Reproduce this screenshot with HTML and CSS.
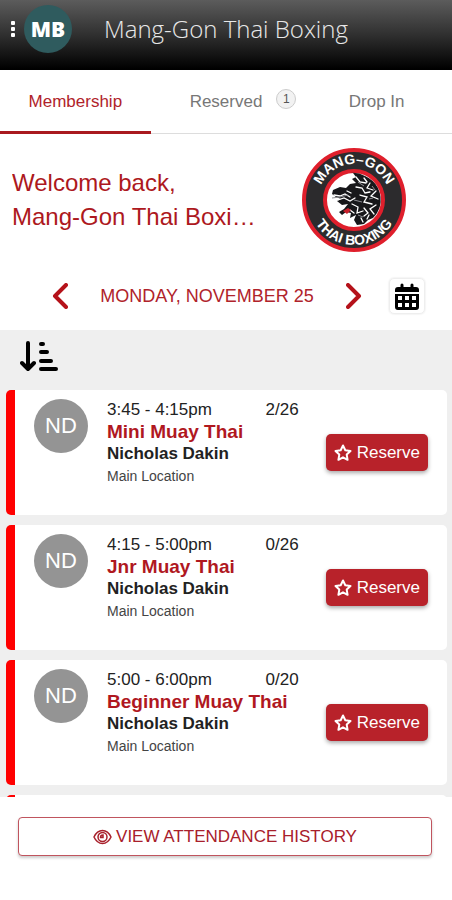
FILE: index.html
```html
<!DOCTYPE html>
<html lang="en">
<head>
    <meta charset="UTF-8">
    <meta name="viewport" content="width=device-width, initial-scale=1.0">
    <title>Mang-Gon Thai Boxing</title>
    <link rel="stylesheet" href="styles.css">
</head>
<body>
    <header class="app-header">
        <button class="menu-btn" aria-label="Menu">
            <svg width="4" height="16" viewBox="0 0 4 16" fill="#fff">
                <rect y="0" width="4" height="4" rx="1"/>
                <rect y="6" width="4" height="4" rx="1"/>
                <rect y="12" width="4" height="4" rx="1"/>
            </svg>
        </button>
        <div class="brand">MB</div>
        <h1>Mang-Gon Thai Boxing</h1>
    </header>

    <nav class="tabs">
        <a class="tab active" href="#membership">Membership</a>
        <a class="tab" href="#reserved"><span class="tab-label">Reserved<span class="badge">1</span></span></a>
        <a class="tab" href="#dropin">Drop In</a>
    </nav>

    <section class="welcome">
        <div class="welcome-text">
            <p>Welcome back,</p>
            <p>Mang-Gon Thai Boxi…</p>
        </div>
        <svg class="club-logo" viewBox="0 0 104 104" role="img" aria-label="Club logo">
            <defs>
                <path id="arcTop" d="M16 52a36 36 0 0 1 72 0"/>
                <path id="arcBottom" d="M7 52a45 45 0 0 0 90 0"/>
            </defs>
            <circle cx="52" cy="52" r="50" fill="#2c2b2d" stroke="#df1f2c" stroke-width="4"/>
            <circle cx="52" cy="52" r="29" fill="#fff" stroke="#df1f2c" stroke-width="4"/>
            <text class="logo-text"><textPath href="#arcTop" startOffset="50%" text-anchor="middle">MANG–GON</textPath></text>
            <text class="logo-text"><textPath href="#arcBottom" startOffset="50%" text-anchor="middle">THAI BOXING</textPath></text>
            <!-- dragon head -->
            <path fill="#17171a" d="M48 25q8-1 15 3 9 4 13 12 4 9 2 18-2 7-7 12l-5 2-4 4-7 1-3-5 2-5-6 3 1-5-5-1-4 3-3-3 5-3 4-5-6 1-5-4 4-2-5-2-4-3 1-4 7-3 6 1 4-4 6-1-4-4 4-2-3-4z"/>
            <path fill="none" stroke="#fff" stroke-width="1.3" stroke-linecap="round" d="M54 29l4 5 6 1M62 30l3 4M68 35l-3 5 6 2M54 39l6 1 3 5 5-1M74 43l-5 5 7 3M58 47l7 2-3 5 8 2M32 47l6 1 5-2 5 3M36 52l6-2 6 3 5-3M50 56l6 3-1 6 6-2M74 57l-6 4 4 5M62 60l4 5-4 3M48 62l4 3M59 70l2 4M67 67l-2 4M45 43l4 2"/>
            <path fill="none" stroke="#8d8d92" stroke-width="1" d="M30 50l8-1 8-2M52 52l8 2M67 51l4-1M56 67l5 2M56 34l6 4M70 38l3 4"/>
            <path fill="#c8202c" d="M41 63l5-3 3 2-4 4z"/>
        </svg>
    </section>

    <section class="date-row">
        <button class="arrow" aria-label="Previous day">
            <svg width="16" height="26" viewBox="0 0 16 26"><path d="M14 2L3 13l11 11"/></svg>
        </button>
        <span class="date">MONDAY, NOVEMBER 25</span>
        <button class="arrow" aria-label="Next day">
            <svg width="16" height="26" viewBox="0 0 16 26"><path d="M2 2l11 11L2 24"/></svg>
        </button>
        <button class="calendar-btn" aria-label="Pick a date">
            <svg width="24" height="27" viewBox="0 0 24 27">
                <path d="M7 2v4M17 2v4" stroke="#000" stroke-width="3" stroke-linecap="round"/>
                <path d="M3 4h18q3 0 3 3v2H0V7q0-3 3-3z"/>
                <path fill-rule="evenodd" d="M0 11h24v13q0 3-3 3H3q-3 0-3-3zM3 13v4h4v-4zM10 13v4h4v-4zM17 13v4h4v-4zM3 20v4h4v-4zM10 20v4h4v-4zM17 20v4h4v-4z"/>
            </svg>
        </button>
    </section>

    <main class="schedule">
        <div class="sort-row">
            <button class="sort-btn" aria-label="Sort">
                <svg width="38" height="31" viewBox="0 0 38 31" fill="none" stroke="#000" stroke-width="4" stroke-linecap="round" stroke-linejoin="round">
                    <path d="M8 2v25M2 22l6 6 6-6M21 3h2M21 11h6M21 20h10M21 28h15"/>
                </svg>
            </button>
        </div>

        <article class="class-card">
            <div class="avatar">ND</div>
            <div class="details">
                <div class="time"><span>3:45 - 4:15pm</span><span>2/26</span></div>
                <h2>Mini Muay Thai</h2>
                <div class="coach">Nicholas Dakin</div>
                <div class="location">Main Location</div>
            </div>
            <button class="reserve-btn">
                <svg width="18" height="18" viewBox="0 0 18 18"><path d="M9 1.5l2.3 4.8 5.2.7-3.8 3.6.9 5.2L9 13.3l-4.6 2.5.9-5.2L1.5 7l5.2-.7z"/></svg>
                Reserve
            </button>
        </article>

        <article class="class-card">
            <div class="avatar">ND</div>
            <div class="details">
                <div class="time"><span>4:15 - 5:00pm</span><span>0/26</span></div>
                <h2>Jnr Muay Thai</h2>
                <div class="coach">Nicholas Dakin</div>
                <div class="location">Main Location</div>
            </div>
            <button class="reserve-btn">
                <svg width="18" height="18" viewBox="0 0 18 18"><path d="M9 1.5l2.3 4.8 5.2.7-3.8 3.6.9 5.2L9 13.3l-4.6 2.5.9-5.2L1.5 7l5.2-.7z"/></svg>
                Reserve
            </button>
        </article>

        <article class="class-card">
            <div class="avatar">ND</div>
            <div class="details">
                <div class="time"><span>5:00 - 6:00pm</span><span>0/20</span></div>
                <h2>Beginner Muay Thai</h2>
                <div class="coach">Nicholas Dakin</div>
                <div class="location">Main Location</div>
            </div>
            <button class="reserve-btn">
                <svg width="18" height="18" viewBox="0 0 18 18"><path d="M9 1.5l2.3 4.8 5.2.7-3.8 3.6.9 5.2L9 13.3l-4.6 2.5.9-5.2L1.5 7l5.2-.7z"/></svg>
                Reserve
            </button>
        </article>

        <article class="class-card"></article>
    </main>

    <footer class="app-footer">
        <button class="history-btn">
            <svg width="19" height="16" viewBox="0 0 19 16" fill="none" stroke="#a8202b" stroke-width="1.5">
                <path d="M1 8Q4 1.5 9.5 1.5T18 8Q15 14.5 9.5 14.5T1 8z"/>
                <circle cx="9.5" cy="8" r="4.5"/>
                <path d="M7.5 8.5q0-2.5 2.5-2.5v2.5z"/>
            </svg>
            VIEW ATTENDANCE HISTORY
        </button>
    </footer>
</body>
</html>
```

FILE: styles.css
```css
* {
    box-sizing: border-box;
}
body {
    margin: 0;
    height: 100vh;
    display: flex;
    flex-direction: column;
    background: #fff;
    color: #222;
    font-family: "Liberation Sans", Arial, sans-serif;
    font-size: 17px;
}
h1, h2, p {
    margin: 0;
}
button {
    font-family: inherit;
    font-size: 17px;
    padding: 0;
    border: none;
    background: none;
    cursor: pointer;
}
svg {
    display: block;
    flex: none;
}

/* header */
.app-header {
    display: flex;
    align-items: center;
    flex: none;
    padding: 4px 11px 15px;
    background: linear-gradient(#5c5c5c, #303030 50%, #000);
    border-bottom: 1px solid #000;
}
.menu-btn {
    margin-right: 9px;
}
.brand {
    width: 48px;
    height: 48px;
    border-radius: 50%;
    background: #2f5b5e;
    color: #fff;
    font: 800 21px/48px "Open Sans", sans-serif;
    text-align: center;
}
.app-header h1 {
    margin-left: 32px;
    color: #e8e8e8;
    font: 300 24px/50px "Open Sans", sans-serif;
    white-space: nowrap;
}

/* tabs */
.tabs {
    display: flex;
    flex: none;
    border-bottom: 1px solid #ddd;
}
.tab {
    flex: 1;
    line-height: 59px;
    padding-top: 2px;
    border-bottom: 3px solid transparent;
    margin-bottom: -1px;
    text-align: center;
    text-decoration: none;
    color: #777;
}
.tab.active {
    color: #b0232b;
    border-bottom-color: #a9191f;
}
.tab-label {
    position: relative;
}
.badge {
    position: absolute;
    left: 100%;
    top: -3px;
    margin-left: 14px;
    width: 20px;
    height: 20px;
    border: 1px solid #ccc;
    border-radius: 50%;
    background: #f2f2f2;
    color: #555;
    font-size: 12px;
    line-height: 18px;
    text-align: center;
}

/* welcome */
.welcome {
    display: flex;
    align-items: center;
    flex: none;
    gap: 40px;
    padding: 14px 46px 10px 12px;
}
.welcome-text {
    flex: 1;
    min-width: 0;
    color: #ad1820;
    font-size: 24px;
    line-height: 34px;
}
.welcome-text p {
    overflow: hidden;
    white-space: nowrap;
    text-overflow: ellipsis;
}
.club-logo {
    width: 104px;
    height: 104px;
}
.logo-text {
    fill: #fff;
    font-size: 14px;
    font-weight: bold;
}

/* date picker */
.date-row {
    display: flex;
    align-items: center;
    flex: none;
    height: 68px;
    padding: 0 27px 0 52px;
}
.arrow path {
    fill: none;
    stroke: #b5121a;
    stroke-width: 4;
    stroke-linecap: round;
    stroke-linejoin: round;
}
.date {
    flex: 1;
    text-align: center;
    white-space: nowrap;
    color: #b0232b;
    font-size: 18px;
}
.calendar-btn {
    display: flex;
    align-items: center;
    justify-content: center;
    width: 36px;
    height: 36px;
    margin-left: 27px;
    border: 1px solid #eee;
    border-radius: 5px;
    box-shadow: 0 0 2px #ddd;
}

/* class list */
.schedule {
    flex: 1;
    min-height: 0;
    overflow: hidden;
    padding: 0 5px 0 6px;
    background: #efefef;
}
.sort-row {
    padding: 11px 14px 18px;
}
.sort-btn {
    display: block;
}
.class-card {
    display: flex;
    align-items: flex-start;
    min-height: 125px;
    margin-bottom: 10px;
    padding: 9px 19px;
    background: #fff;
    border-left: 9px solid #f00;
    border-radius: 5px;
}
.avatar {
    width: 54px;
    height: 54px;
    border-radius: 50%;
    background: #949494;
    color: #fff;
    font-size: 22px;
    line-height: 54px;
    text-align: center;
}
.details {
    flex: 1;
    margin: 0 27px 0 19px;
    line-height: 22px;
    white-space: nowrap;
}
.time {
    display: flex;
    justify-content: space-between;
}
.details h2 {
    color: #b0181f;
    font-size: 19px;
    line-height: 22px;
}
.coach {
    font-weight: bold;
}
.location {
    color: #444;
    font-size: 14px;
}
.reserve-btn {
    display: flex;
    align-items: center;
    align-self: center;
    gap: 5px;
    height: 37px;
    padding: 0 8px;
    border-radius: 5px;
    background: #b8222a;
    color: #fff;
    box-shadow: 0 2px 4px rgba(0,0,0,0.35);
}
.reserve-btn path {
    fill: none;
    stroke: #fff;
    stroke-width: 2;
    stroke-linejoin: round;
}

/* footer */
.app-footer {
    flex: none;
    padding: 20px 20px 44px 18px;
}
.history-btn {
    display: flex;
    align-items: center;
    justify-content: center;
    gap: 4px;
    width: 100%;
    height: 39px;
    border: 1px solid #c0545e;
    border-radius: 4px;
    background: #fff;
    color: #a8202b;
    box-shadow: 0 2px 3px rgba(0,0,0,0.2);
}
```
